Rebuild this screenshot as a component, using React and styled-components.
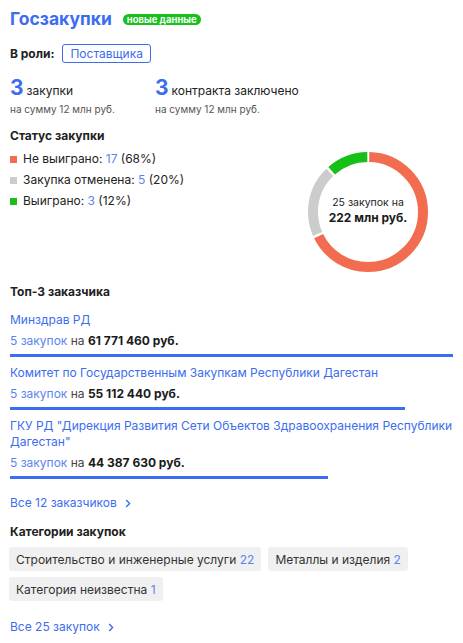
import React from "react";
import styled, { createGlobalStyle } from "styled-components";

const Global = createGlobalStyle`
  html, body { margin: 0; padding: 0; background: #fff; }
  body { font-family: Inter, "Noto Sans", sans-serif; color: #222; }
  * { box-sizing: border-box; }
`;

const BLUE = "#3c6df0";
const LIGHT_BLUE = "#5b84f2";

const Page = styled.div`
  width: 463px;
  padding: 8px 10px 16px 10px;
`;

const TitleRow = styled.div`
  display: flex;
  align-items: center;
  gap: 11px;
  height: 22px;
`;

const Title = styled.h1`
  margin: 0;
  font-size: 17.5px;
  line-height: 22px;
  font-weight: 700;
  color: ${BLUE};
`;

const Badge = styled.span`
  display: inline-flex;
  align-items: center;
  height: 11px;
  padding: 0 4px;
  border-radius: 6px;
  background: #17c01a;
  color: #fff;
  font-size: 9.5px;
  font-weight: 700;
  line-height: 11px;
  margin-top: 1px;
`;

const RoleRow = styled.div`
  display: flex;
  align-items: center;
  gap: 8px;
  margin-top: 14px;
`;

const Label = styled.span`
  font-size: 12px;
  font-weight: 700;
  color: #222;
`;

const RoleButton = styled.span`
  display: inline-flex;
  align-items: center;
  height: 19px;
  padding: 0 7px;
  border: 1px solid ${BLUE};
  border-radius: 3px;
  font-size: 12px;
  color: ${BLUE};
`;

const Stats = styled.div`
  display: grid;
  grid-template-columns: 145px 1fr;
  margin-top: 13px;
`;

const Stat = styled.div`
  display: flex;
  flex-direction: column;
`;

const StatMain = styled.div`
  display: flex;
  align-items: baseline;
  gap: 3px;
  height: 24px;
  font-size: 12px;
  color: #222;
`;

const BigNum = styled.span`
  font-size: 21px;
  line-height: 24px;
  font-weight: 700;
  color: ${BLUE};
`;

const StatSub = styled.div`
  margin-top: 2px;
  font-size: 10px;
  line-height: 14px;
  color: #555;
`;

const SectionTitle = styled.h3`
  margin: ${(p) => p.$mt || 0}px 0 0 0;
  font-size: 12px;
  line-height: 16px;
  font-weight: 700;
  color: #222;
`;

const StatusRow = styled.div`
  display: flex;
  margin-top: 7px;
`;

const Legend = styled.div`
  flex: 1;
  display: flex;
  flex-direction: column;
  gap: 5px;
`;

const LegendItem = styled.div`
  display: flex;
  align-items: center;
  gap: 6px;
  font-size: 12px;
  line-height: 16px;
  color: #222;
`;

const Swatch = styled.span`
  width: 7px;
  height: 7px;
  background: ${(p) => p.$color};
  flex: none;
`;

const Num = styled.span`
  color: ${LIGHT_BLUE};
`;

const DonutBox = styled.div`
  width: 172px;
  display: flex;
  justify-content: center;
  padding-top: 1px;
  padding-left: 2px;
`;

const DonutWrap = styled.div`
  position: relative;
  width: 120px;
  height: 120px;
`;

const DonutCenter = styled.div`
  position: absolute;
  inset: 0;
  display: flex;
  flex-direction: column;
  align-items: center;
  justify-content: center;
  text-align: center;
  padding-bottom: 2px;
`;

const DonutSmall = styled.span`
  font-size: 10.5px;
  line-height: 14px;
  color: #222;
`;

const DonutBig = styled.span`
  font-size: 12px;
  line-height: 16px;
  font-weight: 700;
  color: #1a1a1a;
`;

const Customers = styled.div`
  display: flex;
  flex-direction: column;
  margin-top: 12px;
  gap: 8px;
`;

const Customer = styled.div`
  display: flex;
  flex-direction: column;
`;

const CustomerName = styled.a`
  font-size: 12px;
  line-height: 16px;
  color: ${BLUE};
  text-decoration: none;
`;

const CustomerSum = styled.div`
  margin-top: 5px;
  font-size: 12px;
  line-height: 16px;
  color: #444;
`;

const Count = styled.span`
  color: ${LIGHT_BLUE};
`;

const Amount = styled.b`
  font-weight: 700;
  color: #1a1a1a;
`;

const Bar = styled.div`
  margin-top: 5px;
  height: 3px;
  background: ${BLUE};
`;

const MoreLink = styled.a`
  display: inline-flex;
  align-items: center;
  gap: 8px;
  margin-top: ${(p) => p.$mt}px;
  font-size: 12px;
  line-height: 16px;
  color: ${BLUE};
  text-decoration: none;
`;

const Block = styled.div`
  display: flex;
  flex-direction: column;
  align-items: flex-start;
`;

const Chips = styled.div`
  display: flex;
  flex-wrap: wrap;
  gap: 6px 7px;
  margin-top: 7px;
  margin-left: -1px;
`;

const Chip = styled.span`
  display: inline-flex;
  align-items: center;
  height: 24px;
  padding: 0 7px;
  border-radius: 3px;
  background: #f0f0f0;
  font-size: 12px;
  color: #333;
`;

const Chevron = () => (
  <svg width="6" height="9" viewBox="0 0 6 9" fill="none">
    <path d="M1.2 1 L4.6 4.5 L1.2 8" stroke={BLUE} strokeWidth="1.4" />
  </svg>
);

const segments = [
  { value: 17, color: "#f26d50" },
  { value: 5, color: "#cccccc" },
  { value: 3, color: "#16c017" },
];

const Donut = () => {
  const r = 55;
  const c = 2 * Math.PI * r;
  const total = segments.reduce((s, x) => s + x.value, 0);
  const gap = 2.5;
  let offset = 0;
  return (
    <svg width="120" height="120" viewBox="0 0 120 120">
      <g transform="rotate(-90 60 60)">
        {segments.map((s, i) => {
          const len = (s.value / total) * c;
          const el = (
            <circle
              key={i}
              cx="60"
              cy="60"
              r={r}
              fill="none"
              stroke={s.color}
              strokeWidth="10"
              strokeDasharray={`${len - gap} ${c - len + gap}`}
              strokeDashoffset={-(offset + gap / 2)}
            />
          );
          offset += len;
          return el;
        })}
      </g>
    </svg>
  );
};

const customers = [
  { name: "Минздрав РД", amount: 61771460 },
  { name: "Комитет по Государственным Закупкам Республики Дагестан", amount: 55112440 },
  {
    name: 'ГКУ РД "Дирекция Развития Сети Объектов Здравоохранения Республики Дагестан"',
    amount: 44387630,
  },
];

const fmt = (n) => n.toString().replace(/\B(?=(\d{3})+(?!\d))/g, " ");

const maxAmount = Math.max(...customers.map((c) => c.amount));

export default function App() {
  return (
    <Page>
      <Global />
      <TitleRow>
        <Title>Госзакупки</Title>
        <Badge>новые данные</Badge>
      </TitleRow>

      <RoleRow>
        <Label>В роли:</Label>
        <RoleButton>Поставщика</RoleButton>
      </RoleRow>

      <Stats>
        <Stat>
          <StatMain>
            <BigNum>3</BigNum>закупки
          </StatMain>
          <StatSub>на сумму 12 млн руб.</StatSub>
        </Stat>
        <Stat>
          <StatMain>
            <BigNum>3</BigNum>контракта заключено
          </StatMain>
          <StatSub>на сумму 12 млн руб.</StatSub>
        </Stat>
      </Stats>

      <SectionTitle $mt={12}>Статус закупки</SectionTitle>
      <StatusRow>
        <Legend>
          <LegendItem>
            <Swatch $color="#f26d50" />
            <span>
              Не выиграно: <Num>17</Num> (68%)
            </span>
          </LegendItem>
          <LegendItem>
            <Swatch $color="#cccccc" />
            <span>
              Закупка отменена: <Num>5</Num> (20%)
            </span>
          </LegendItem>
          <LegendItem>
            <Swatch $color="#16c017" />
            <span>
              Выиграно: <Num>3</Num> (12%)
            </span>
          </LegendItem>
        </Legend>
        <DonutBox>
          <DonutWrap>
            <Donut />
            <DonutCenter>
              <DonutSmall>25 закупок на</DonutSmall>
              <DonutBig>222 млн руб.</DonutBig>
            </DonutCenter>
          </DonutWrap>
        </DonutBox>
      </StatusRow>

      <SectionTitle $mt={12}>Топ-3 заказчика</SectionTitle>
      <Customers>
        {customers.map((c) => (
          <Customer key={c.name}>
            <CustomerName href="#">{c.name}</CustomerName>
            <CustomerSum>
              <Count>5 закупок</Count> на <Amount>{fmt(c.amount)} руб.</Amount>
            </CustomerSum>
            <Bar style={{ width: `${(c.amount / maxAmount) * 100}%` }} />
          </Customer>
        ))}
      </Customers>

      <Block>
        <MoreLink href="#" $mt={16}>
          Все 12 заказчиков <Chevron />
        </MoreLink>
      </Block>

      <SectionTitle $mt={13}>Категории закупок</SectionTitle>
      <Chips>
        <Chip>
          Строительство и инженерные услуги&nbsp;<Num>22</Num>
        </Chip>
        <Chip>
          Металлы и изделия&nbsp;<Num>2</Num>
        </Chip>
        <Chip>
          Категория неизвестна&nbsp;<Num>1</Num>
        </Chip>
      </Chips>

      <Block>
        <MoreLink href="#" $mt={18}>
          Все 25 закупок <Chevron />
        </MoreLink>
      </Block>
    </Page>
  );
}
